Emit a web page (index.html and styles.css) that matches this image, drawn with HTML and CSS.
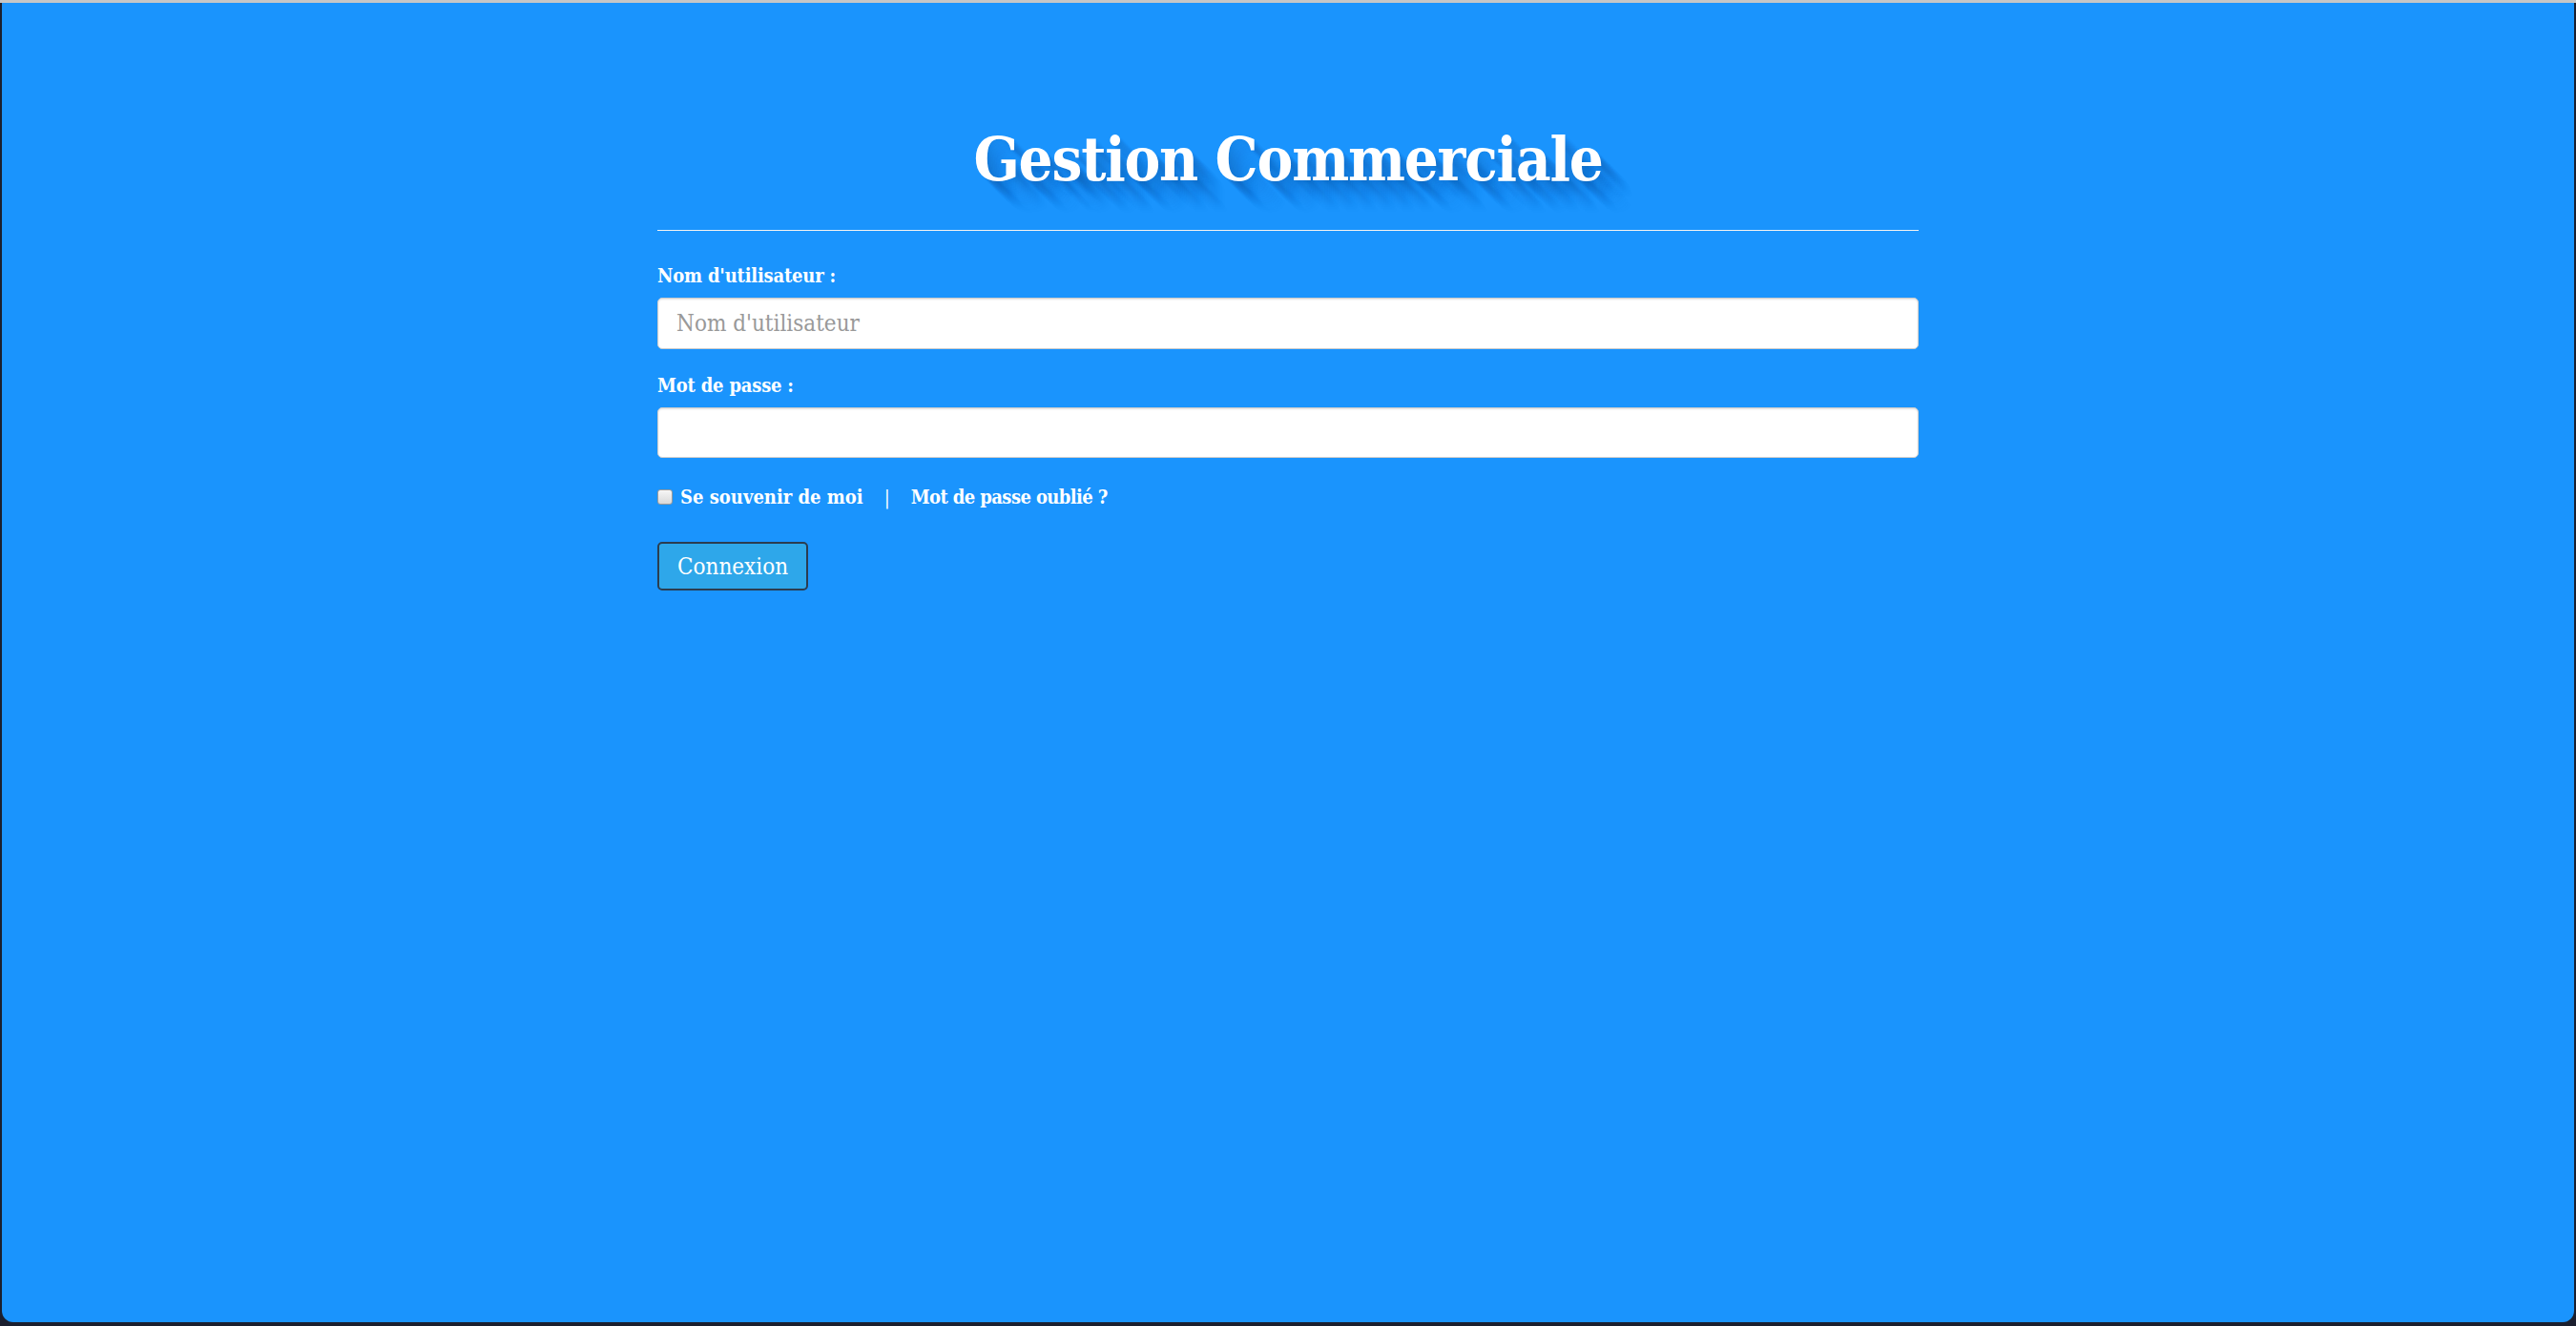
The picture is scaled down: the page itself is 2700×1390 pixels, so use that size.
FILE: index.html
```html
<!DOCTYPE html>
<html lang="fr">
<head>
<meta charset="utf-8">
<title>Gestion Commerciale</title>
<link rel="stylesheet" href="styles.css">
</head>
<body>
<div class="screen">
  <main class="login">
    <h1 class="title">Gestion Commerciale</h1>
    <hr class="rule">
    <form class="form">
      <label class="label" for="user">Nom d'utilisateur :</label>
      <input class="field" id="user" type="text" placeholder="Nom d'utilisateur">
      <label class="label label-second" for="pass">Mot de passe :</label>
      <input class="field field-second" id="pass" type="password">
      <div class="options">
        <label class="remember"><input class="check" type="checkbox"><span>Se souvenir de moi</span></label>
        <span class="sep">|</span>
        <a class="forgot" href="#">Mot de passe oublié ?</a>
      </div>
      <div class="actions">
        <button class="btn" type="button">Connexion</button>
      </div>
    </form>
  </main>
</div>
</body>
</html>
```

FILE: styles.css
```css
html, body {
  margin: 0;
  padding: 0;
}
body {
  background: #1b1f2e;
  border-top: 3px solid #c6c6c6;
  height: 1387px;
  font-family: "DejaVu Serif Condensed", "DejaVu Serif", "Liberation Serif", serif;
  font-stretch: condensed;
}
.screen {
  margin: 0 2px;
  height: 1383px;
  background: #1a94fd;
  border-radius: 0 0 12px 12px;
  overflow: hidden;
}
.login {
  width: 1322px;
  margin: 0 auto;
  padding-top: 124px;
}
.title {
  margin: 0;
  text-align: center;
  color: #fff;
  font-size: 63px;
  letter-spacing: -1.2px;
  line-height: 80px;
  font-weight: bold;
  text-shadow:
    1px 1px 1px rgba(0, 40, 90, 0.05),
    3px 3px 2px rgba(0, 40, 90, 0.05),
    5px 5px 2px rgba(0, 40, 90, 0.045),
    7px 7px 2px rgba(0, 40, 90, 0.04),
    9px 9px 2px rgba(0, 40, 90, 0.04),
    11px 11px 2px rgba(0, 40, 90, 0.035),
    13px 13px 2px rgba(0, 40, 90, 0.03),
    15px 15px 2px rgba(0, 40, 90, 0.03),
    17px 17px 3px rgba(0, 40, 90, 0.025),
    19px 19px 3px rgba(0, 40, 90, 0.022),
    21px 21px 3px rgba(0, 40, 90, 0.02),
    23px 23px 3px rgba(0, 40, 90, 0.018),
    25px 25px 3px rgba(0, 40, 90, 0.015),
    27px 27px 4px rgba(0, 40, 90, 0.012),
    29px 29px 4px rgba(0, 40, 90, 0.01),
    31px 31px 4px rgba(0, 40, 90, 0.008),
    33px 33px 4px rgba(0, 40, 90, 0.006),
    35px 35px 4px rgba(0, 40, 90, 0.005);
}
.rule {
  margin: 34px 0 0;
  border: 0;
  border-top: 1px solid #f2f2f2;
  height: 0;
}
.form {
  display: flex;
  flex-direction: column;
  align-items: stretch;
}
.label {
  display: block;
  margin-top: 33px;
  color: #fff;
  font-size: 20px;
  font-weight: bold;
  line-height: 28px;
  letter-spacing: -0.2px;
}
.label-second {
  margin-top: 24px;
}
.field {
  box-sizing: border-box;
  margin: 9px 0 0;
  height: 54px;
  width: 100%;
  padding: 0 19px;
  border: 1px solid #cccccc;
  border-radius: 5px;
  background: #fff;
  box-shadow: inset 0 1px 2px rgba(0, 0, 0, 0.12);
  font-family: "DejaVu Serif Condensed", "DejaVu Serif", "Liberation Serif", serif;
  font-stretch: condensed;
  font-size: 24px;
  color: #555;
  outline: none;
}
.field-second {
  height: 53px;
}
.field::placeholder {
  color: #999;
}
.options {
  display: flex;
  align-items: center;
  margin-top: 27px;
  height: 28px;
  color: #fff;
  font-size: 20px;
  font-weight: bold;
  line-height: 28px;
}
.remember {
  display: flex;
  align-items: center;
}
.check {
  appearance: none;
  -webkit-appearance: none;
  box-sizing: border-box;
  margin: 0 8px 0 0;
  width: 16px;
  height: 16px;
  border: 1px solid #9a9a9a;
  border-radius: 3px;
  background: linear-gradient(#f6f6f6, #d9d9d9);
}
.sep {
  margin: 0 22px 0 22px;
  font-weight: normal;
}
.forgot {
  color: #fff;
  text-decoration: none;
  letter-spacing: -0.6px;
}
.actions {
  margin-top: 33px;
}
.btn {
  box-sizing: border-box;
  width: 158px;
  height: 51px;
  padding: 0 19px;
  border: 2px solid #2b3d50;
  border-radius: 5px;
  background: #2ea7ea;
  color: #fff;
  font-family: "DejaVu Serif Condensed", "DejaVu Serif", "Liberation Serif", serif;
  font-stretch: condensed;
  font-size: 24px;
  text-align: left;
}
```
